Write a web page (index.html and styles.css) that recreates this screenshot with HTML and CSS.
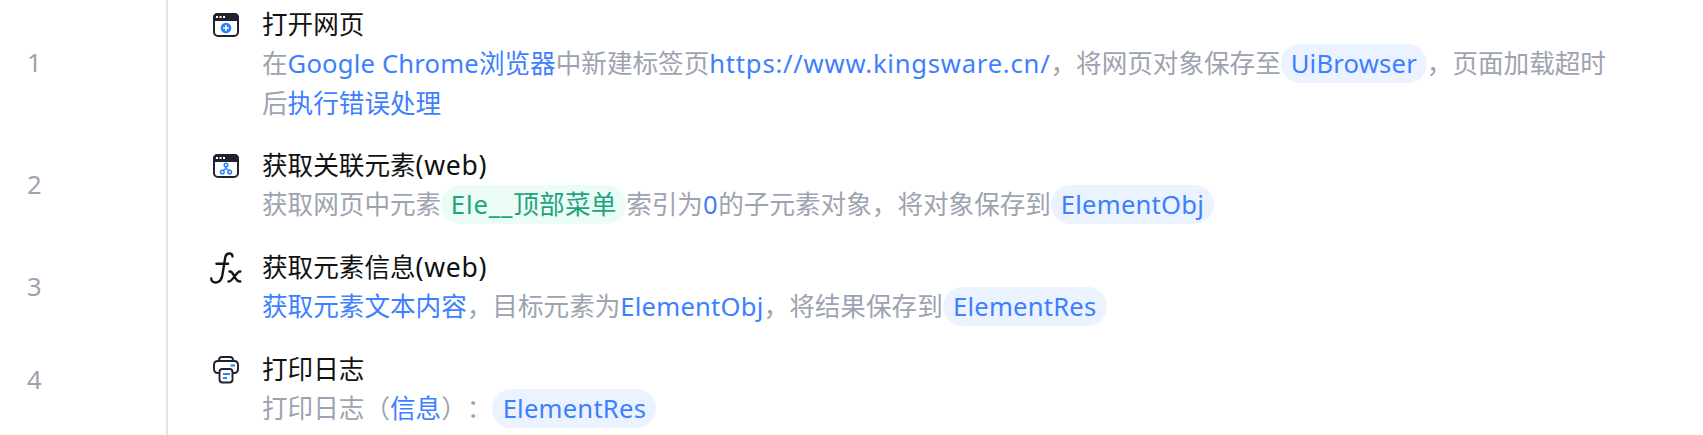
FILE: index.html
```html
<!DOCTYPE html>
<html lang="zh-CN">
<head>
<meta charset="utf-8">
<title>流程步骤</title>
<link rel="stylesheet" href="styles.css">
</head>
<body>
<main class="flow">
  <section class="step step-tall">
    <div class="num">1</div>
    <div class="body">
      <svg class="icon" viewBox="0 0 32 32"><rect x="4" y="4" width="24" height="22" rx="4" fill="#fff" stroke="#221f2e" stroke-width="2"/><path d="M3 11V8q0-5 5-5h16q5 0 5 5v3z" fill="#221f2e"/><path d="M6 7h2M9.500 7h2M13 7h2" stroke="#fff" stroke-width="2"/><circle cx="16" cy="18" r="5.300" fill="#2b80ff"/><path d="M16 15v6M13 18h6" stroke="#fff" stroke-width="1.600"/></svg>
      <div class="text">
        <h2>打开网页</h2>
        <p>在<b class="google">Google Chrome</b><b>浏览器</b>中新建标签页<b class="url">https://www.kingsware.cn/</b>，将网页对象保存至<span class="pill browser">UiBrowser</span>，页面加载超时后<b>执行错误处理</b></p>
      </div>
    </div>
  </section>
  <section class="step">
    <div class="num">2</div>
    <div class="body">
      <svg class="icon" viewBox="0 0 32 32"><rect x="4" y="4" width="24" height="22" rx="4" fill="#fff" stroke="#221f2e" stroke-width="2"/><path d="M3 11V8q0-5 5-5h16q5 0 5 5v3z" fill="#221f2e"/><path d="M6 7h2M9.500 7h2M13 7h2" stroke="#fff" stroke-width="2"/><g fill="none" stroke="#2b80ff" stroke-width="1.500"><circle cx="16" cy="14" r="1.800"/><circle cx="12.300" cy="21" r="1.800"/><circle cx="19.700" cy="21" r="1.800"/><path d="M16 15.700v2M13 19.500l3-2 3 2"/></g></svg>
      <div class="text">
        <h2>获取关联元素<span class="web">(web)</span></h2>
        <p>获取网页中元素<span class="pill green"><span class="ele">Ele__</span>顶部菜单</span>索引为<b class="zero">0</b>的子元素对象，将对象保存到<span class="pill obj">ElementObj</span></p>
      </div>
    </div>
  </section>
  <section class="step">
    <div class="num">3</div>
    <div class="body">
      <svg class="icon fx" viewBox="0 0 32 32"><g fill="none" stroke="#161618" stroke-width="2.400" stroke-linecap="round" stroke-linejoin="round"><path d="M22.500 4.500C22.300.500 16.500.300 15.300 5L12.300 23.500C11.300 30 6 31.500 3 29.800 1.700 29 1.200 27.800 1.200 26.500"/><path d="M6.500 11.800h11.500"/><path d="M19.500 19.500c5-1 4.500 11 10.800 10M30.300 19.500c-3.500-1-8 11-11.800 10"/></g></svg>
      <div class="text">
        <h2>获取元素信息<span class="web">(web)</span></h2>
        <p><b>获取元素文本内容</b>，目标元素为<b class="latin">ElementObj</b>，将结果保存到<span class="pill res">ElementRes</span></p>
      </div>
    </div>
  </section>
  <section class="step step-last">
    <div class="num">4</div>
    <div class="body">
      <svg class="icon" viewBox="0 0 32 32"><g fill="none" stroke="#221f2e" stroke-width="1.900" stroke-linejoin="round"><path d="M9 6V5q0-3 3-3h8q3 0 3 3v1"/><path d="M10 18H8q-4 0-4-4v-4q0-4 4-4h16q4 0 4 4v4q0 4-4 4h-1"/><rect x="9.500" y="14" width="13" height="13.500" rx="3"/></g><path d="M20.500 10.500h4.500M13 19h7M13 23h4" stroke="#2b80ff" stroke-width="1.900"/></svg>
      <div class="text">
        <h2>打印日志</h2>
        <p>打印日志（<b>信息</b>）：<span class="pill res">ElementRes</span></p>
      </div>
    </div>
  </section>
</main>
</body>
</html>
```
FILE: styles.css
```css
body {
  margin: 0;
  height: 435px;
  overflow: hidden;
  background: #fff;
  font: 25.6px/39.3px "Noto Sans", "Noto Sans CJK SC", sans-serif;
  text-spacing-trim: space-all;
  color: #9da3b0;
}
.flow {
  display: flex;
  flex-direction: column;
}
.step {
  display: grid;
  grid-template-columns: 166px 1fr;
  height: 102px;
}
.step-tall { height: 135px; }
.step-last { height: 100px; }
.num {
  box-sizing: border-box;
  padding: 0 0 3px 27px;
  display: flex;
  align-items: center;
}
.step-tall .num { padding-bottom: 9px; }
.step-last .num { padding-bottom: 18px; }
.body {
  border-left: 2px solid #e4e4e4;
  padding-left: 42px;
  display: flex;
  align-items: flex-start;
}
.icon {
  width: 32px;
  height: 32px;
  flex: none;
  margin-top: 16px;
}
.step-tall .icon { margin-top: 10px; }
.icon.fx { margin-top: 15px; }
.text {
  width: 1355px;
  margin: 11px 0 0 20px;
}
.step-tall .text { margin-top: 5px; }
h2, p { margin: 0; font-size: inherit; font-weight: 400; }
h2 { color: #111; }
b { font-weight: 400; color: #3d7fff; }
.latin, .pill { letter-spacing: 0.22px; }
.google { letter-spacing: 0.18px; }
.url { letter-spacing: 0.77px; }
.web { font-size: 26.6px; line-height: 1; letter-spacing: 0.7px; }
.ele { letter-spacing: 0.9px; }
.zero { letter-spacing: 0.6px; }
.pill {
  display: inline-block;
  box-sizing: border-box;
  height: 39px;
  vertical-align: top;
  border-radius: 20px;
  background: #eaf3ff;
  color: #3d7fff;
  text-align: center;
  white-space: nowrap;
}
.browser { width: 146px; }
.obj { width: 163px; }
.res { width: 164px; }
.green { width: 185px; background: #ebfbf5; color: #1fa37f; }
```
